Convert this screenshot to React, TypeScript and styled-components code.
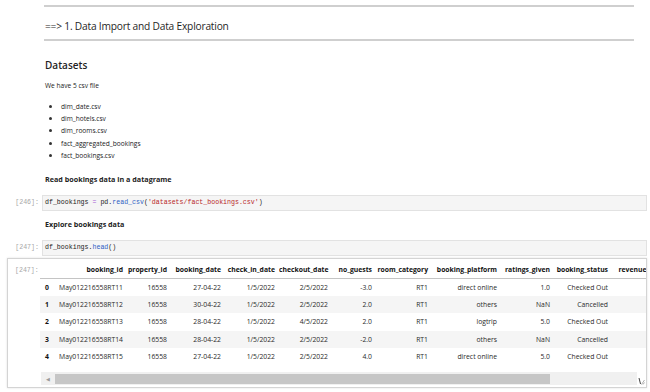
import * as React from 'react';
import styled, { createGlobalStyle } from 'styled-components';

const GlobalStyle = createGlobalStyle`
  html, body {
    margin: 0;
    padding: 0;
    background: #ffffff;
  }
  body {
    font-family: "Open Sans", "Noto Sans", sans-serif;
    color: #212121;
  }
`;

const Notebook = styled.div`
  width: 650px;
  height: 392px;
  overflow: hidden;
  background: #fff;
`;

const Markdown = styled.div<{ $top?: number }>`
  margin: ${props => props.$top || 0}px 16px 0 45px;
`;

const Rule = styled.div<{ $top?: number }>`
  height: 2px;
  margin: ${props => props.$top || 0}px 0 0 -1px;
  background: #cfcfcf;
`;

const Heading = styled.h2`
  margin: 0;
  padding-top: 6px;
  height: 26px;
  line-height: 26px;
  font-size: 10.2px;
  letter-spacing: -0.2px;
  font-weight: 400;
  color: #1f1f1f;
`;

const SubHeading = styled.h3`
  margin: 16px 0 0;
  height: 16px;
  line-height: 16px;
  font-size: 10px;
  font-weight: 600;
  color: #1f1f1f;
`;

const Text = styled.p<{ $top?: number; $bold?: boolean }>`
  margin: ${props => props.$top || 0}px 0 0;
  height: 12px;
  line-height: 12px;
  font-size: ${props => (props.$bold ? 7.2 : 6.6)}px;
  font-weight: ${props => (props.$bold ? 700 : 400)};
  color: #222;
`;

const FileList = styled.ul`
  list-style: none;
  margin: 8px 0 0;
  padding: 0 0 0 4px;
`;

const FileItem = styled.li`
  display: flex;
  align-items: center;
  height: 12.3px;
  font-size: 6.6px;
  color: #222;

  &::before {
    content: '';
    width: 3px;
    height: 3px;
    border-radius: 50%;
    background: #333;
    margin-right: 9px;
  }
`;

const CodeRow = styled.div<{ $top?: number }>`
  display: flex;
  margin: ${props => props.$top || 0}px 3px 0 0;
`;

const Prompt = styled.div<{ $width: number }>`
  flex: 0 0 ${props => props.$width}px;
  box-sizing: border-box;
  padding-right: 3px;
  text-align: right;
  font-family: "Liberation Mono", "DejaVu Sans Mono", monospace;
  font-size: 6.6px;
  line-height: 16px;
  color: #a8a8a8;
`;

const InputBox = styled.div`
  flex: 1;
  height: 16px;
  box-sizing: border-box;
  border: 1px solid #e2e2e2;
  background: #f5f5f5;
  padding-left: 2px;
  font-family: "Liberation Mono", "DejaVu Sans Mono", monospace;
  font-size: 6.6px;
  line-height: 14px;
  color: #222;
  white-space: pre;
`;

const Tok = styled.span<{ $kind: 'op' | 'prop' | 'str' }>`
  color: ${props =>
    props.$kind === 'op' ? '#a55bd6' : props.$kind === 'prop' ? '#2f5fc4' : '#b82828'};
`;

const OutputArea = styled.div`
  position: relative;
  display: flex;
  margin: 2px 3px 0 7px;
  height: 130px;
  box-sizing: border-box;
  border: 1px solid #d4d4d4;
  box-shadow: 0 0 2px rgba(0, 0, 0, 0.12);
  padding-top: 3px;
`;

const OutPrompt = styled.div`
  flex: 0 0 32px;
  padding-left: 7px;
  box-sizing: border-box;
  font-family: "Liberation Mono", "DejaVu Sans Mono", monospace;
  font-size: 6.6px;
  line-height: 17px;
  color: #a8a8a8;
`;

const OutputBody = styled.div`
  flex: 1;
  min-width: 0;
  overflow: hidden;
`;

const Frame = styled.table`
  table-layout: fixed;
  border-collapse: collapse;
  border-spacing: 0;
  font-size: 6.8px;
  color: #2a2a2a;
`;

const HeadCell = styled.th`
  height: 16px;
  padding: 0 4px 0 0;
  text-align: right;
  font-weight: 700;
  white-space: nowrap;
  overflow: hidden;
  border-bottom: 1px solid #c4c4c4;
  color: #111;
`;

const BodyRow = styled.tr<{ $striped: boolean }>`
  height: 17.4px;
  background: ${props => (props.$striped ? '#f5f5f5' : '#fff')};
`;

const IndexCell = styled.th`
  padding: 0 4px 0 0;
  text-align: right;
  font-weight: 700;
  color: #111;
`;

const Cell = styled.td`
  padding: 0 4px 0 0;
  text-align: right;
  white-space: nowrap;
  overflow: hidden;
`;

const ScrollTrack = styled.div`
  display: flex;
  align-items: center;
  margin: 7px 9px 0 1px;
  height: 13px;
  background: #f0f0f0;
`;

const ScrollArrow = styled.span`
  flex: 0 0 14px;
  text-align: center;
  font-size: 5px;
  color: #9a9a9a;
`;

const ScrollThumb = styled.div<{ $width: number }>`
  flex: 0 0 ${props => props.$width}px;
  height: 10px;
  background: #c6c6c6;
`;

const Grip = styled.svg`
  position: absolute;
  right: 1px;
  bottom: 2px;
`;

const columns: { name: string; width: number }[] = [
  { name: '', width: 13 },
  { name: 'booking_id', width: 74 },
  { name: 'property_id', width: 44 },
  { name: 'booking_date', width: 54 },
  { name: 'check_in_date', width: 54 },
  { name: 'checkout_date', width: 53 },
  { name: 'no_guests', width: 44 },
  { name: 'room_category', width: 56 },
  { name: 'booking_platform', width: 69 },
  { name: 'ratings_given', width: 53 },
  { name: 'booking_status', width: 58 },
  { name: 'revenue_generated', width: 76 },
  { name: 'revenue_realized', width: 70 },
];

const rows: string[][] = [
  ['May012216558RT11', '16558', '27-04-22', '1/5/2022', '2/5/2022', '-3.0', 'RT1', 'direct online', '1.0', 'Checked Out', '10010', '10010'],
  ['May012216558RT12', '16558', '30-04-22', '1/5/2022', '2/5/2022', '2.0', 'RT1', 'others', 'NaN', 'Cancelled', '9100', '3640'],
  ['May012216558RT13', '16558', '28-04-22', '1/5/2022', '4/5/2022', '2.0', 'RT1', 'logtrip', '5.0', 'Checked Out', '9100', '9100'],
  ['May012216558RT14', '16558', '28-04-22', '1/5/2022', '2/5/2022', '-2.0', 'RT1', 'others', 'NaN', 'Cancelled', '9100', '3640'],
  ['May012216558RT15', '16558', '27-04-22', '1/5/2022', '2/5/2022', '4.0', 'RT1', 'direct online', '5.0', 'Checked Out', '10920', '10920'],
];

const files = [
  'dim_date.csv',
  'dim_hotels.csv',
  'dim_rooms.csv',
  'fact_aggregated_bookings',
  'fact_bookings.csv',
];

const tableWidth = columns.reduce((sum, c) => sum + c.width, 0);

export default function App() {
  return (
    <Notebook>
      <GlobalStyle />
      <Markdown>
        <Rule $top={5} />
        <Heading>==&gt; 1. Data Import and Data Exploration</Heading>
        <Rule />
        <SubHeading>Datasets</SubHeading>
        <Text $top={7}>We have 5 csv file</Text>
        <FileList>
          {files.map(f => (
            <FileItem key={f}>{f}</FileItem>
          ))}
        </FileList>
        <Text $top={11.5} $bold={true}>Read bookings data in a datagrame</Text>
      </Markdown>

      <CodeRow $top={10}>
        <Prompt $width={42}>[246]:</Prompt>
        <InputBox>
          df_bookings <Tok $kind="op">=</Tok> pd.<Tok $kind="prop">read_csv</Tok>(
          <Tok $kind="str">'datasets/fact_bookings.csv'</Tok>)
        </InputBox>
      </CodeRow>

      <Markdown $top={7}>
        <Text $bold={true}>Explore bookings data</Text>
      </Markdown>

      <CodeRow $top={10}>
        <Prompt $width={42}>[247]:</Prompt>
        <InputBox>
          df_bookings.<Tok $kind="prop">head</Tok>()
        </InputBox>
      </CodeRow>

      <OutputArea>
        <OutPrompt>[247]:</OutPrompt>
        <OutputBody>
          <Frame style={{ width: tableWidth }}>
            <colgroup>
              {columns.map((c, i) => (
                <col key={i} style={{ width: c.width }} />
              ))}
            </colgroup>
            <thead>
              <tr>
                {columns.map((c, i) => (
                  <HeadCell key={i}>{c.name}</HeadCell>
                ))}
              </tr>
            </thead>
            <tbody>
              {rows.map((r, i) => (
                <BodyRow key={i} $striped={i % 2 === 1}>
                  <IndexCell>{i}</IndexCell>
                  {r.map((v, j) => (
                    <Cell key={j}>{v}</Cell>
                  ))}
                </BodyRow>
              ))}
            </tbody>
          </Frame>
          <ScrollTrack>
            <ScrollArrow>◀</ScrollArrow>
            <ScrollThumb $width={495} />
          </ScrollTrack>
        </OutputBody>
        <Grip width="7" height="8" viewBox="0 0 7 8">
          <path d="M1 1 L2.5 7" stroke="#444" strokeWidth="1" />
          <path d="M6.5 3 L3.5 7.5 M6.5 5.5 L5 7.5" stroke="#999" strokeWidth="0.8" />
        </Grip>
      </OutputArea>
    </Notebook>
  );
}
